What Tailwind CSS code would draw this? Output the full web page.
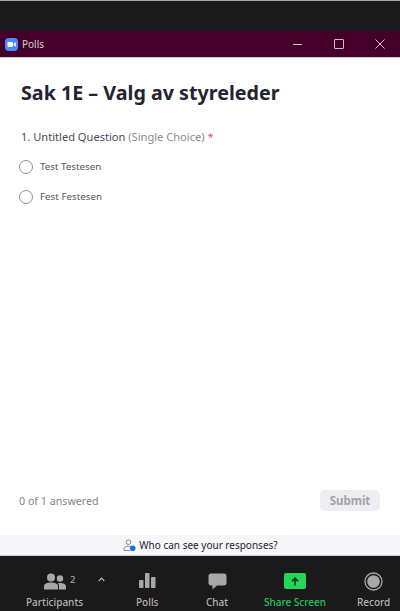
<!DOCTYPE html>
<html lang="en">
<head>
  <meta charset="UTF-8">
  <meta name="viewport" content="width=device-width, initial-scale=1.0">
  <title>Polls</title>
  <script src="https://cdn.jsdelivr.net/npm/@tailwindcss/browser@4"></script>
</head>
<body class="bg-white font-['Noto_Sans',sans-serif]">
  <div class="w-[400px] h-[611px] flex flex-col overflow-hidden">
    <!-- strip above the window -->
    <div class="h-[31px] shrink-0 bg-[#1a1a1a] border-t border-[#a8a8a8]"></div>

    <!-- title bar -->
    <div class="h-[27px] shrink-0 bg-[#45002a] border-b border-[#d8c4d0] flex items-center pl-[5px] text-[#d9ccd4]">
      <svg width="13" height="13" viewBox="0 0 13 13">
        <rect width="13" height="13" rx="4" fill="#4a8cff"/>
        <rect x="2.5" y="4" width="5.5" height="5" rx="1.2" fill="#fff"/>
        <path d="M8.5 6 L10.8 4.3 V8.7 L8.5 7 Z" fill="#fff"/>
      </svg>
      <span class="ml-[4px] text-[10px] leading-none">Polls</span>
      <svg class="ml-auto" width="9" height="9" viewBox="0 0 9 9"><path d="M0 4.5H9" stroke="#cdbcc7" stroke-width="1"/></svg>
      <svg class="ml-[32px]" width="10" height="10" viewBox="0 0 10 10"><rect x="0.5" y="0.5" width="9" height="9" rx="0.5" fill="none" stroke="#cdbcc7"/></svg>
      <svg class="ml-[31px] mr-[15px]" width="10" height="10" viewBox="0 0 10 10"><path d="M0.5 0.5L9.5 9.5M9.5 0.5L0.5 9.5" stroke="#d9ccd4" stroke-width="1"/></svg>
    </div>

    <!-- poll -->
    <div class="flex-1 flex flex-col bg-white">
      <h1 class="mt-[21px] ml-[21px] text-[19.7px] leading-[28px] font-bold text-[#232333]">Sak 1E – Valg av styreleder</h1>
      <p class="mt-[22px] ml-[21px] text-[11.1px] leading-[16px] text-[#4a4a5c]">1. Untitled Question <span class="text-[#8a8a98]">(Single Choice)</span> <span class="text-[#f0556a]">*</span></p>

      <div class="mt-[15px] ml-[19px] flex flex-col gap-[16px]">
        <label class="flex items-center h-[14px] text-[9.8px] text-[#55555f]">
          <span class="w-[14px] h-[14px] rounded-full border border-[#8f8f98] bg-white"></span>
          <span class="ml-[7px]">Test Testesen</span>
        </label>
        <label class="flex items-center h-[14px] text-[9.8px] text-[#55555f]">
          <span class="w-[14px] h-[14px] rounded-full border border-[#8f8f98] bg-white"></span>
          <span class="ml-[7px]">Fest Festesen</span>
        </label>
      </div>

      <div class="mt-auto mb-[24px] ml-[19px] mr-[20px] flex items-center justify-between">
        <span class="text-[10.7px] text-[#82828f] translate-y-px">0 of 1 answered</span>
        <button class="w-[60px] h-[21px] rounded-[5px] bg-[#ededf2] text-[11.5px] font-bold text-[#a2a2ad]">Submit</button>
      </div>
    </div>

    <!-- privacy notice -->
    <div class="h-[21px] shrink-0 bg-[#f6f6fb] border-b border-[#d8ccd4] flex items-center justify-center pl-[1px] text-[10px] text-[#232333]">
      <svg width="14" height="13" viewBox="0 0 14 13" class="mr-[2px]">
        <circle cx="5.5" cy="3.2" r="2.3" fill="none" stroke="#8a8a94"/>
        <path d="M1 11.5 V9.8 C1 8 3 7.2 5.5 7.2 C6.3 7.2 7 7.3 7.6 7.5 M1 11.5 H7" fill="none" stroke="#8a8a94"/>
        <circle cx="9.7" cy="9.3" r="2.8" fill="#0e72ed"/>
      </svg>
      <span>Who can see your responses?</span>
    </div>

    <!-- toolbar -->
    <div class="h-[55px] shrink-0 bg-[#1a1a1a] relative text-[10px] font-medium text-[#b4b4b4]">
      <svg class="absolute left-[44px] top-[17px]" width="22" height="17" viewBox="0 0 22 17">
        <circle cx="7" cy="4.5" r="4" fill="#a8a8a8"/>
        <circle cx="16" cy="5.5" r="3.2" fill="#a8a8a8"/>
        <path d="M0 16.5 V13.5 C0 10.5 3 9.5 7 9.5 C11 9.5 14 10.5 14 13.5 V16.5 Z" fill="#a8a8a8"/>
        <path d="M15 16.5 V13 C15 12 14.6 11 13.8 10.2 C14.5 10 15.2 9.9 16 9.9 C19 9.9 22 10.8 22 13.5 V16.5 Z" fill="#a8a8a8"/>
      </svg>
      <span class="absolute left-[70px] top-[17px] text-[9.5px] leading-[13px] text-[#a8a8a8]">2</span>
      <svg class="absolute left-[98px] top-[21px]" width="7" height="5" viewBox="0 0 7 5"><path d="M0.7 4L3.5 1.2L6.3 4" fill="none" stroke="#b4b4b4" stroke-width="1.2"/></svg>
      <span class="absolute left-[26px] top-[39px] leading-[14px]">Participants</span>

      <svg class="absolute left-[139px] top-[16px]" width="17" height="17" viewBox="0 0 17 17">
        <rect x="0" y="8" width="4.5" height="8" rx="0.8" fill="#a8a8a8"/>
        <rect x="6" y="1" width="4.5" height="15" rx="0.8" fill="#a8a8a8"/>
        <rect x="12" y="5" width="4.5" height="11" rx="0.8" fill="#a8a8a8"/>
      </svg>
      <span class="absolute left-[136px] top-[39px] leading-[14px]">Polls</span>

      <svg class="absolute left-[208px] top-[17px]" width="19" height="18" viewBox="0 0 19 18">
        <path d="M3 0.5 H16 C17.5 0.5 18.5 1.5 18.5 3 V10 C18.5 11.5 17.5 12.5 16 12.5 H9 L4.5 16.5 V12.5 H3 C1.5 12.5 0.5 11.5 0.5 10 V3 C0.5 1.5 1.5 0.5 3 0.5 Z" fill="#a8a8a8"/>
      </svg>
      <span class="absolute left-[206px] top-[39px] leading-[14px]">Chat</span>

      <div class="absolute left-[284px] top-[17px] w-[22px] h-[16px] rounded-[2px] bg-[#22d65a] flex items-center justify-center">
        <svg width="8" height="9" viewBox="0 0 8 9"><path d="M4 8.5V1.5M1 4.3L4 1.2L7 4.3" fill="none" stroke="#10261a" stroke-width="1.5"/></svg>
      </div>
      <span class="absolute left-[264px] top-[39px] leading-[14px] text-[#22c55e]">Share Screen</span>

      <svg class="absolute left-[364px] top-[16px]" width="19" height="19" viewBox="0 0 19 19">
        <circle cx="9.5" cy="9.5" r="8.5" fill="none" stroke="#a8a8a8" stroke-width="1.3"/>
        <circle cx="9.5" cy="9.5" r="6.3" fill="#a8a8a8"/>
      </svg>
      <span class="absolute left-[357px] top-[39px] leading-[14px]">Record</span>
    </div>
  </div>
</body>
</html>
